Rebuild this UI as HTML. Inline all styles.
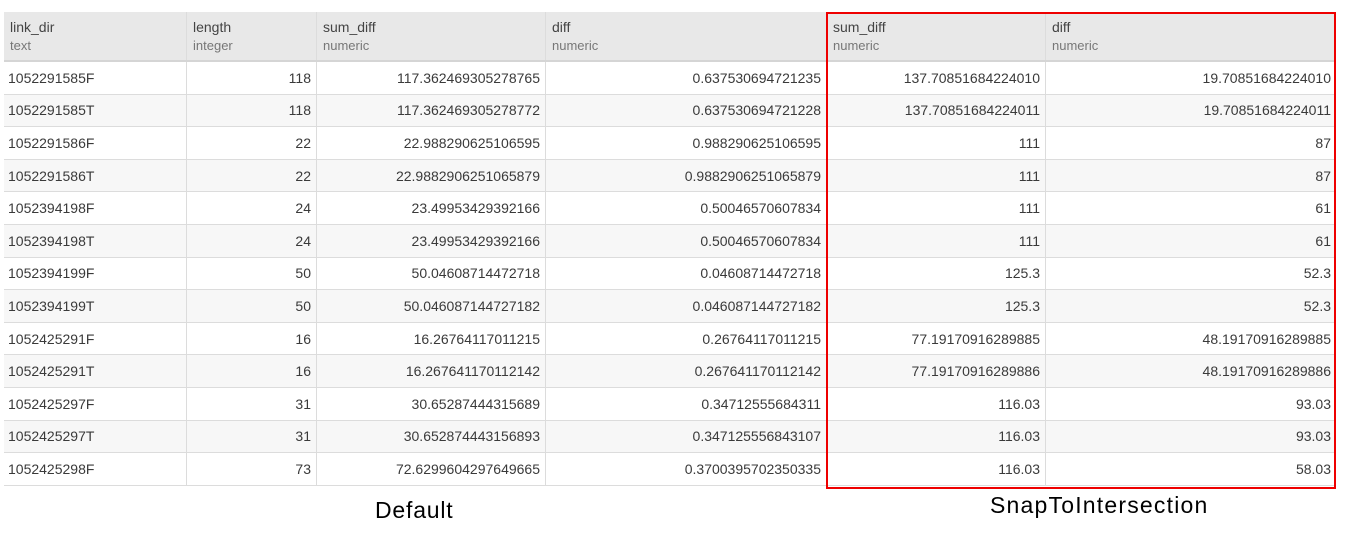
<!DOCTYPE html>
<html><head><meta charset="utf-8"><style>
body{margin:0;width:1346px;height:537px;background:#fff;font-family:"Liberation Sans",sans-serif;position:relative;overflow:hidden}
.t{position:absolute;left:4px;top:12px;width:1332px}
.r{display:flex;height:32.6px;border-bottom:1px solid #dcdcdc;box-sizing:border-box}
.r:nth-child(odd){background:#f7f7f7}
.h{height:50px;background:#e8e8e8!important;border-bottom:2px solid #d5d5d5}
.c{box-sizing:border-box;border-right:1px solid #dcdcdc;font-size:14px;color:#3a3a3a;padding:0 5px;display:flex;align-items:center;justify-content:flex-end;white-space:nowrap}
.c:first-child{justify-content:flex-start;padding-left:4px}
.h .c{flex-direction:column;align-items:flex-start;justify-content:center;padding-left:6px;font-size:14px;color:#444}
.h .c span{font-size:13px;color:#777;margin-top:3px}
.w1{width:183px}.w2{width:130px}.w3{width:229px}.w4{width:281px}.w5{width:219px}.w6{width:290px;border-right:none}
.box{position:absolute;left:826px;top:12px;width:510px;height:477px;border:2px solid #e00;box-sizing:border-box}
.lbl{position:absolute;font-size:23px;color:#000}
</style></head><body>
<div class="t">
<div class="r h"><div class="c w1">link_dir<span>text</span></div><div class="c w2">length<span>integer</span></div><div class="c w3">sum_diff<span>numeric</span></div><div class="c w4">diff<span>numeric</span></div><div class="c w5">sum_diff<span>numeric</span></div><div class="c w6">diff<span>numeric</span></div></div>
<div class="r"><div class="c w1">1052291585F</div><div class="c w2">118</div><div class="c w3">117.362469305278765</div><div class="c w4">0.637530694721235</div><div class="c w5">137.70851684224010</div><div class="c w6">19.70851684224010</div></div>
<div class="r"><div class="c w1">1052291585T</div><div class="c w2">118</div><div class="c w3">117.362469305278772</div><div class="c w4">0.637530694721228</div><div class="c w5">137.70851684224011</div><div class="c w6">19.70851684224011</div></div>
<div class="r"><div class="c w1">1052291586F</div><div class="c w2">22</div><div class="c w3">22.988290625106595</div><div class="c w4">0.988290625106595</div><div class="c w5">111</div><div class="c w6">87</div></div>
<div class="r"><div class="c w1">1052291586T</div><div class="c w2">22</div><div class="c w3">22.9882906251065879</div><div class="c w4">0.9882906251065879</div><div class="c w5">111</div><div class="c w6">87</div></div>
<div class="r"><div class="c w1">1052394198F</div><div class="c w2">24</div><div class="c w3">23.49953429392166</div><div class="c w4">0.50046570607834</div><div class="c w5">111</div><div class="c w6">61</div></div>
<div class="r"><div class="c w1">1052394198T</div><div class="c w2">24</div><div class="c w3">23.49953429392166</div><div class="c w4">0.50046570607834</div><div class="c w5">111</div><div class="c w6">61</div></div>
<div class="r"><div class="c w1">1052394199F</div><div class="c w2">50</div><div class="c w3">50.04608714472718</div><div class="c w4">0.04608714472718</div><div class="c w5">125.3</div><div class="c w6">52.3</div></div>
<div class="r"><div class="c w1">1052394199T</div><div class="c w2">50</div><div class="c w3">50.046087144727182</div><div class="c w4">0.046087144727182</div><div class="c w5">125.3</div><div class="c w6">52.3</div></div>
<div class="r"><div class="c w1">1052425291F</div><div class="c w2">16</div><div class="c w3">16.26764117011215</div><div class="c w4">0.26764117011215</div><div class="c w5">77.19170916289885</div><div class="c w6">48.19170916289885</div></div>
<div class="r"><div class="c w1">1052425291T</div><div class="c w2">16</div><div class="c w3">16.267641170112142</div><div class="c w4">0.267641170112142</div><div class="c w5">77.19170916289886</div><div class="c w6">48.19170916289886</div></div>
<div class="r"><div class="c w1">1052425297F</div><div class="c w2">31</div><div class="c w3">30.65287444315689</div><div class="c w4">0.34712555684311</div><div class="c w5">116.03</div><div class="c w6">93.03</div></div>
<div class="r"><div class="c w1">1052425297T</div><div class="c w2">31</div><div class="c w3">30.652874443156893</div><div class="c w4">0.347125556843107</div><div class="c w5">116.03</div><div class="c w6">93.03</div></div>
<div class="r"><div class="c w1">1052425298F</div><div class="c w2">73</div><div class="c w3">72.6299604297649665</div><div class="c w4">0.3700395702350335</div><div class="c w5">116.03</div><div class="c w6">58.03</div></div>
</div>
<div class="box"></div>
<div class="lbl" style="left:375px;top:497px;letter-spacing:0.8px">Default</div>
<div class="lbl" style="left:990px;top:492px;letter-spacing:1.2px">SnapToIntersection</div>
</body></html>
